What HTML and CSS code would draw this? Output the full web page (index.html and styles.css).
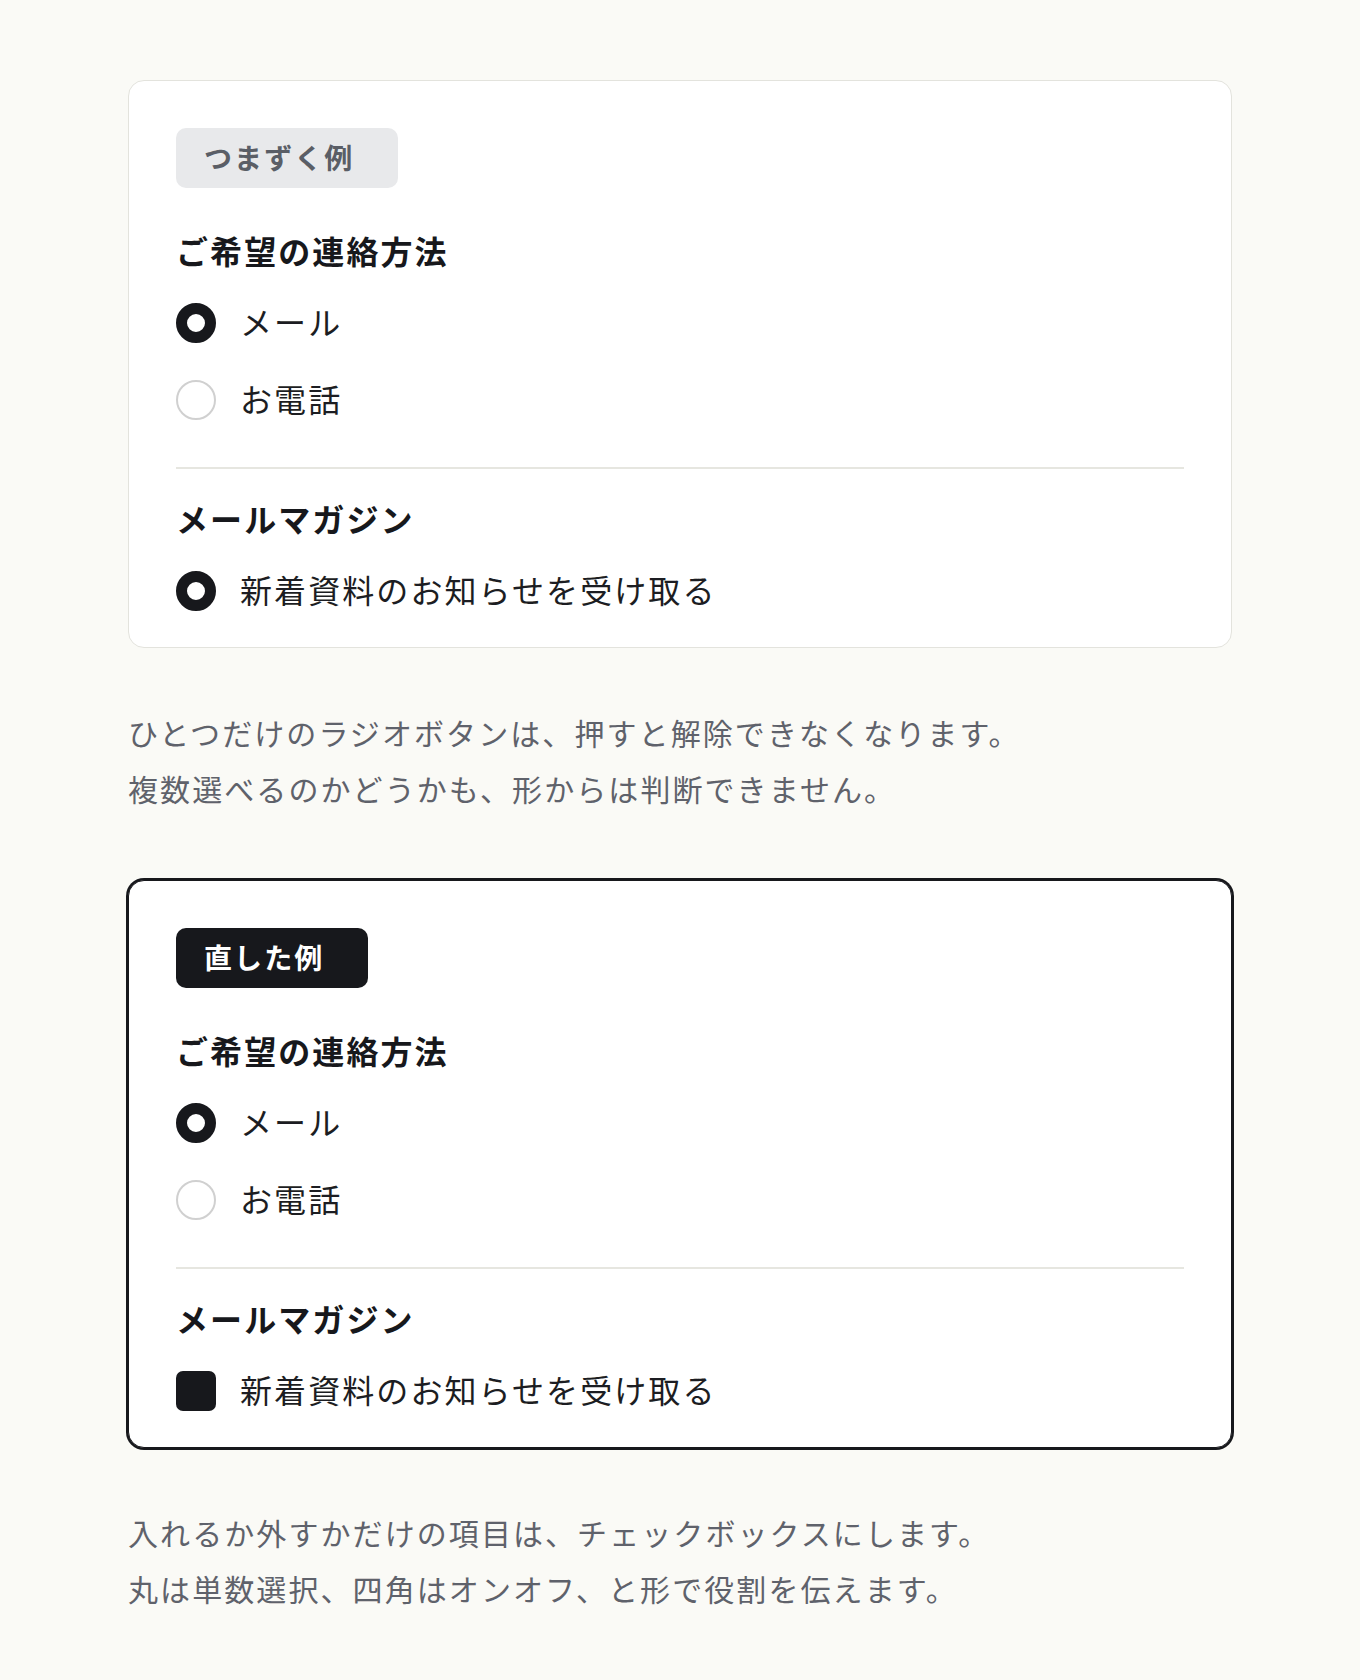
FILE: index.html
```html
<!DOCTYPE html>
<html lang="ja">
<head>
<meta charset="utf-8">
<title>ラジオボタンとチェックボックス</title>
<link rel="stylesheet" href="styles.css">
</head>
<body>
<main class="page">
  <section class="card card-bad">
    <span class="badge badge-bad">つまずく例</span>
    <h2 class="group-title first">ご希望の連絡方法</h2>
    <div class="options">
      <div class="option"><span class="radio checked"></span><span class="label">メール</span></div>
      <div class="option"><span class="radio"></span><span class="label">お電話</span></div>
    </div>
    <hr class="divider">
    <h2 class="group-title">メールマガジン</h2>
    <div class="options">
      <div class="option"><span class="radio checked"></span><span class="label">新着資料のお知らせを受け取る</span></div>
    </div>
  </section>
  <p class="note">ひとつだけのラジオボタンは、押すと解除できなくなります。<br>複数選べるのかどうかも、形からは判断できません。</p>

  <section class="card card-good">
    <span class="badge badge-good">直した例</span>
    <h2 class="group-title first">ご希望の連絡方法</h2>
    <div class="options">
      <div class="option"><span class="radio checked"></span><span class="label">メール</span></div>
      <div class="option"><span class="radio"></span><span class="label">お電話</span></div>
    </div>
    <hr class="divider">
    <h2 class="group-title">メールマガジン</h2>
    <div class="options">
      <div class="option"><span class="checkbox checked"></span><span class="label">新着資料のお知らせを受け取る</span></div>
    </div>
  </section>
  <p class="note">入れるか外すかだけの項目は、チェックボックスにします。<br>丸は単数選択、四角はオンオフ、と形で役割を伝えます。</p>
</main>
</body>
</html>
```

FILE: styles.css
```css
* { box-sizing: border-box; }

html, body {
  margin: 0;
  padding: 0;
  background: #fafaf6;
}

body {
  font-family: "Noto Sans CJK JP", "Noto Sans", sans-serif;
  color: #17181c;
  letter-spacing: 0.13em;
}

.page {
  width: 1104px;
  margin: 0 auto;
  padding: 80px 0 40px;
}

.card {
  background: #ffffff;
  border-radius: 16px;
  border: 1px solid #e3e3dd;
  padding: 47px 47px 36px;
  display: flex;
  flex-direction: column;
  align-items: flex-start;
}

.card-good {
  border-color: #17181c;
  box-shadow: 0 0 0 2px #17181c;
}

.badge {
  display: inline-block;
  height: 60px;
  line-height: 58px;
  padding: 0 44px 2px 28px;
  border-radius: 10px;
  font-size: 28px;
  font-weight: 700;
}

.badge-bad {
  background: #e8e9eb;
  color: #5a5e66;
}

.badge-good {
  background: #17181c;
  color: #ffffff;
}

.group-title {
  margin: 25px 0 0;
  font-size: 32px;
  font-weight: 700;
  line-height: 48px;
  color: #17181c;
}

.group-title.first {
  margin-top: 38px;
}

.options {
  display: flex;
  flex-direction: column;
  gap: 37px;
  margin-top: 29px;
}

.option {
  display: flex;
  align-items: center;
  gap: 24px;
  height: 40px;
}

.label {
  font-size: 32px;
  line-height: 40px;
  padding-bottom: 4px;
  color: #1c1d22;
}

.radio {
  width: 40px;
  height: 40px;
  border-radius: 50%;
  border: 2px solid #d0d0d0;
  background: #ffffff;
  flex: none;
}

.radio.checked {
  border: 11px solid #17181c;
}

.checkbox {
  width: 40px;
  height: 40px;
  border-radius: 7px;
  background: #17181c;
  flex: none;
}

.divider {
  align-self: stretch;
  border: 0;
  height: 2px;
  background: #e6e6e0;
  margin: 47px 0 0;
}

.note {
  margin: 56px 0 64px;
  font-size: 30px;
  line-height: 56px;
  color: #5f626b;
}
```
